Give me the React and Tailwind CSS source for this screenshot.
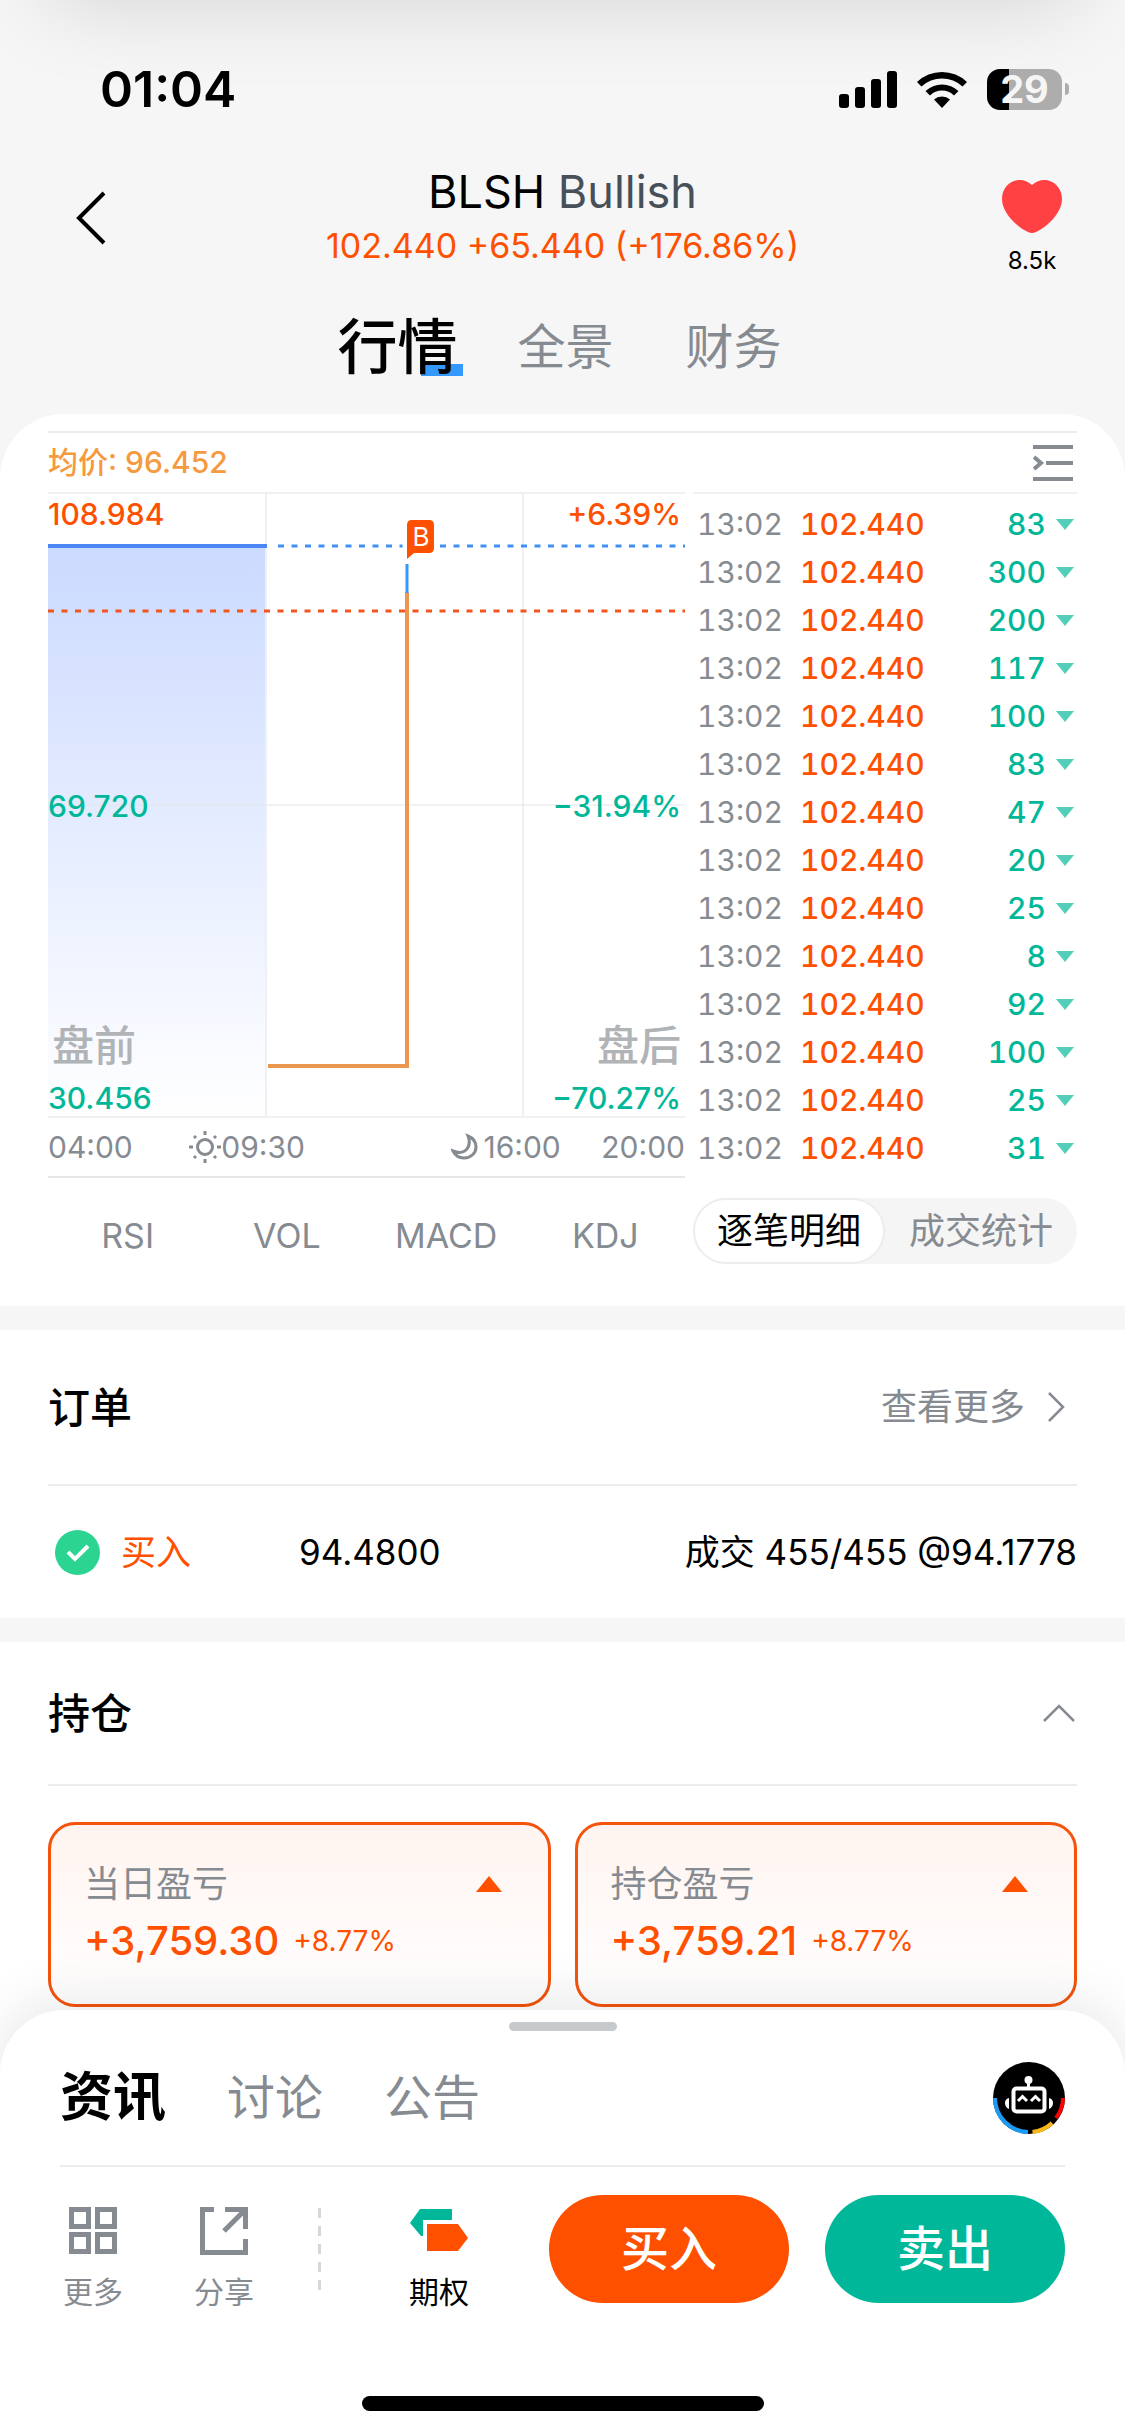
import React, { useState } from 'react';

const ORDER_FLOW = [83, 300, 200, 117, 100, 83, 47, 20, 25, 8, 92, 100, 25, 31];

const TABS = ['行情', '全景', '财务'];
const INDICATORS = ['RSI', 'VOL', 'MACD', 'KDJ'];
const FEEDS = ['资讯', '讨论', '公告'];

const PNL = [
  { label: '当日盈亏', value: '+3,759.30', pct: '+8.77%' },
  { label: '持仓盈亏', value: '+3,759.21', pct: '+8.77%' },
];

const StatusBar = () => (
  <div className="flex h-[132px] items-center justify-between pt-[46px] pl-[100px] pr-14">
    <span className="text-[50px] leading-[50px] font-semibold">01:04</span>
    <div className="flex items-center gap-5">
      <svg width="58" height="38" viewBox="0 0 58 38">
        <rect x="0" y="24" width="10" height="14" rx="3" />
        <rect x="16" y="17" width="10" height="21" rx="3" />
        <rect x="32" y="9" width="10" height="29" rx="3" />
        <rect x="48" y="1" width="10" height="37" rx="3" />
      </svg>
      <svg width="50" height="38" viewBox="0 0 50 38">
        <path d="M0 12 A36 36 0 0 1 50 12 L45.500 16.500 A30 30 0 0 0 4.500 16.500 Z" />
        <path d="M8.500 21 A24 24 0 0 1 41.500 21 L37 25.500 A17 17 0 0 0 13 25.500 Z" />
        <path d="M17 29.500 A12 12 0 0 1 33 29.500 L25 38 Z" />
      </svg>
      <div className="flex items-center gap-[3px]">
        <div className="flex h-[41px] w-[75px] items-center justify-center rounded-[13px] bg-[linear-gradient(90deg,#000_22px,#adadad_22px)] text-[38px] leading-none font-bold text-[#f6f6f6]">
          29
        </div>
        <div className="h-3 w-1 rounded-r-full bg-[#adadad]" />
      </div>
    </div>
  </div>
);

const Header = () => (
  <header className="flex items-center justify-between px-12 pt-[30px]">
    <button aria-label="返回" className="flex w-[120px] pl-7">
      <svg width="30" height="54" viewBox="0 0 30 54" fill="none" stroke="#000" strokeWidth="4">
        <path d="M28 2 L3 27 L28 52" />
      </svg>
    </button>
    <div className="text-center">
      <h1 className="text-[45px] leading-[56px]">
        BLSH <span className="text-[#474f59]">Bullish</span>
      </h1>
      <p className="text-[34px] leading-[52px] text-[#ff5000]">102.440 +65.440 (+176.86%)</p>
    </div>
    <button className="flex w-[120px] flex-col items-end pt-[18px]">
      <span className="flex flex-col items-center gap-4 pr-[15px]">
        <svg width="60" height="53" viewBox="0 0 60 53" fill="#ff4143">
          <path d="M30 5 C34 1.500 38 0 42 0 C52 0 60 8 60 19 C60 33 45 47 34 52 Q30 54 26 52 C15 47 0 33 0 19 C0 8 8 0 18 0 C22 0 26 1.500 30 5 Z" />
        </svg>
        <span className="text-[24px] leading-[24px]">8.5k</span>
      </span>
    </button>
  </header>
);

const PriceChart = () => (
  <div className="relative h-[626px] text-[30px] leading-[32px]">
    <svg className="absolute inset-0 h-full w-full" viewBox="0 0 637 626" preserveAspectRatio="none" fill="none">
      <defs>
        <linearGradient id="premarket" x1="0" y1="0" x2="0" y2="1">
          <stop offset="0" stopColor="#cbdaff" />
          <stop offset="1" stopColor="#ffffff" />
        </linearGradient>
      </defs>
      <rect x="0" y="54" width="218" height="571" fill="url(#premarket)" />
      <g stroke="#f0f0f2" strokeWidth="2">
        <path d="M0 1 H637 M0 625 H637 M218 0 V626 M475 0 V626" />
        <path d="M0 313 H637" strokeWidth="1" stroke="#e2e4e8" />
      </g>
      <path d="M0 54 H219" stroke="#4b86f5" strokeWidth="4" />
      <path d="M230 54 H637" stroke="#3f8ff5" strokeWidth="3" strokeDasharray="6 7.500" />
      <path d="M0 119 H637" stroke="#f0561d" strokeWidth="3" strokeDasharray="6 7.500" />
      <path d="M220 574 H359 V100" stroke="#ec9750" strokeWidth="4" />
      <path d="M359 101 V72" stroke="#3399ff" strokeWidth="3" />
      <path d="M352 24 H392 V64 H366 L356 71 Z" fill="#fff" />
      <path d="M364 28 H381 Q386 28 386 33 V56 Q386 61 381 61 H366 L359 67 V33 Q359 28 364 28 Z" fill="#ff5000" />
      <text x="373" y="54" fill="#fff" fontSize="26" textAnchor="middle" fontFamily="Inter">B</text>
    </svg>
    <div className="absolute inset-0 flex flex-col justify-between pt-[6px] pr-1 text-[#00b899]">
      <div className="flex justify-between font-medium text-[#ff5000]">
        <span>108.984</span>
        <span>+6.39%</span>
      </div>
      <div className="flex justify-between pt-[60px] font-medium">
        <span>69.720</span>
        <span>−31.94%</span>
      </div>
      <div className="font-medium">
        <div className="flex justify-between pb-[11px] pl-1 text-[42px] leading-[50px] text-[#b1b4b7]">
          <span>盘前</span>
          <span>盘后</span>
        </div>
        <div className="flex justify-between pb-1">
          <span>30.456</span>
          <span>−70.27%</span>
        </div>
      </div>
    </div>
  </div>
);

const SunIcon = () => (
  <svg width="32" height="32" viewBox="0 0 32 32" fill="none" stroke="#868b91" strokeWidth="3">
    <circle cx="16" cy="16" r="7.500" />
    <path d="M16 0 V4 M16 28 V32 M0 16 H4 M28 16 H32 M5 5 L7 7 M25 25 L27 27 M5 27 L7 25 M25 7 L27 5" />
  </svg>
);

const MoonIcon = () => (
  <svg width="28" height="28" viewBox="0 0 28 28" fill="none" stroke="#868b91" strokeWidth="3">
    <path d="M17 3 C22 5 25 9 25 14 C25 20 20 25 13 25 C8 25 4 22 2 18 C7 20 12 20 15 17 C19 13 19 8 17 3 Z" />
  </svg>
);

const TimeAxis = () => (
  <div className="flex h-[60px] items-center justify-between border-b-2 border-[#e6e7e8] text-[30px] text-[#868b91]">
    <span>04:00</span>
    <span className="flex items-center pl-4">
      <SunIcon />
      09:30
    </span>
    <span className="flex items-center gap-1 pl-[106px]">
      <MoonIcon />
      16:00
    </span>
    <span>20:00</span>
  </div>
);

const TradeTable = () => (
  <table className="mt-[6px] w-full text-[30px] tabular-nums">
    <tbody>
      {ORDER_FLOW.map((volume, i) => (
        <tr key={i} className="h-12">
          <td className="w-[107px] p-0 pl-1 text-[#868b91]">13:02</td>
          <td className="p-0 font-medium text-[#ff5000]">102.440</td>
          <td className="p-0 pr-[3px] font-medium text-[#00b899]">
            <span className="flex items-center justify-end gap-[10px]">
              {volume}
              <svg width="18" height="11" viewBox="0 0 18 11" fill="#53ceb8">
                <path d="M0 0 H18 L9 11 Z" />
              </svg>
            </span>
          </td>
        </tr>
      ))}
    </tbody>
  </table>
);

const QuotePanel = () => {
  const [mode, setMode] = useState('逐笔明细');

  return (
    <section className="rounded-t-[64px] bg-white px-12 pt-[17px] pb-[42px]">
      <div className="flex h-[61px] items-center justify-between border-t-2 border-[#ececee] text-[30px] text-[#f59a3e]">
        <span className="font-medium">均价: 96.452</span>
        <button aria-label="收起明细" className="pr-1">
          <svg width="40" height="36" viewBox="0 0 40 36" fill="none" stroke="#868b91" strokeWidth="4">
            <path d="M0 2 H40 M13 18 H40 M0 34 H40" />
            <path d="M1 12 L8 18 L1 24" />
          </svg>
        </button>
      </div>
      <div className="flex gap-2">
        <div className="min-w-0 flex-1">
          <PriceChart />
          <TimeAxis />
          <div className="grid grid-cols-4 pt-[34px] text-[34px] leading-[48px] text-[#868b91]">
            {INDICATORS.map((name) => (
              <button key={name}>{name}</button>
            ))}
          </div>
        </div>
        <div className="w-[384px] border-t-2 border-[#f0f0f2]">
          <TradeTable />
          <div className="mt-[26px] grid h-[66px] grid-cols-2 rounded-full bg-[#f5f5f5] text-[36px]">
            {['逐笔明细', '成交统计'].map((item) => (
              <button
                key={item}
                onClick={() => setMode(item)}
                className={`rounded-full leading-[60px] ${
                  mode === item ? 'border-2 border-[#ededed] bg-white text-black' : 'text-[#868b91]'
                }`}
              >
                {item}
              </button>
            ))}
          </div>
        </div>
      </div>
    </section>
  );
};

const Orders = () => (
  <section className="bg-white px-12">
    <div className="flex h-[156px] items-center justify-between border-b-2 border-[#ececee]">
      <h2 className="text-[42px] font-medium">订单</h2>
      <a href="#orders" className="flex items-center gap-[22px] pr-3 text-[36px] text-[#868b91]">
        查看更多
        <svg width="18" height="30" viewBox="0 0 18 30" fill="none" stroke="#868b91" strokeWidth="2.500">
          <path d="M2 1 L16 15 L2 29" />
        </svg>
      </a>
    </div>
    <div className="flex h-[132px] items-center text-[35px]">
      <svg className="ml-[6px]" width="47" height="47" viewBox="0 0 47 47" fill="none">
        <circle cx="23.500" cy="23.500" r="22.500" fill="#2bd490" />
        <path d="M14 23 L21 30 L34 17" stroke="#fff" strokeWidth="4" />
      </svg>
      <span className="w-[198px] pl-5 text-[#ff5000]">买入</span>
      <span>94.4800</span>
      <span className="ml-auto">成交 455/455 @94.1778</span>
    </div>
  </section>
);

const Positions = () => (
  <section className="bg-white px-12 pb-[3px]">
    <div className="flex h-[144px] items-center justify-between border-b-2 border-[#ececee]">
      <h2 className="text-[42px] font-medium">持仓</h2>
      <button aria-label="收起">
        <svg width="34" height="18" viewBox="0 0 34 18" fill="none" stroke="#868b91" strokeWidth="2.500">
          <path d="M1 17 L16 2 L31 17" />
        </svg>
      </button>
    </div>
    <div className="grid grid-cols-2 gap-6 pt-9">
      {PNL.map((item) => (
        <div
          key={item.label}
          className="h-[185px] rounded-[27px] border-[3px] border-[#f4530c] bg-linear-to-b from-[#fff4f0] to-white pt-8 pr-[46px] pl-[33px]"
        >
          <div className="flex items-center justify-between text-[36px] leading-[54px] text-[#868b91]">
            {item.label}
            <svg width="26" height="16" viewBox="0 0 26 16" fill="#ff5000">
              <path d="M13 0 L26 16 H0 Z" />
            </svg>
          </div>
          <div className="flex items-center gap-[14px] leading-[60px] text-[#ff5000]">
            <span className="text-[40px] font-medium">{item.value}</span>
            <span className="text-[28px]">{item.pct}</span>
          </div>
        </div>
      ))}
    </div>
  </section>
);

const RobotIcon = () => (
  <svg width="72" height="72" viewBox="0 0 72 72" fill="none">
    <circle cx="36" cy="36" r="36" fill="#000" />
    <path d="M2 36 A34 34 0 0 0 35 70" stroke="#1a9bf5" strokeWidth="4" />
    <path d="M39.500 70 A34 34 0 0 0 59 61" stroke="#fbb617" strokeWidth="4" />
    <path d="M63 56 A34 34 0 0 0 70 36" stroke="#f00" strokeWidth="4" />
    <circle cx="35.500" cy="18" r="4" fill="#fff" />
    <path d="M35.500 20 V26" stroke="#fff" strokeWidth="3" />
    <rect x="20.500" y="26.500" width="31" height="23" rx="3" stroke="#fff" strokeWidth="4" />
    <path d="M25 39 L29.500 34.500 L34 39 M38 39 L42.500 34.500 L47 39" stroke="#fff" strokeWidth="3" />
    <path d="M16 36 Q12 37 12 41 Q12 45 16 47 Z M56 36 Q60 37 60 41 Q60 45 56 47 Z" fill="#fff" />
  </svg>
);

const BottomSheet = () => {
  const [feed, setFeed] = useState('资讯');

  return (
    <footer className="relative rounded-t-[64px] bg-white px-[60px] pt-3 pb-6 shadow-[0_-6px_60px_rgba(0,0,0,0.1)]">
      <div className="mx-auto h-[9px] w-[108px] rounded-full bg-[#c6cacd]" />
      <div className="flex h-[136px] items-center justify-between border-b-2 border-[#ececee]">
        <nav className="flex items-center gap-[61px]">
          {FEEDS.map((name) => (
            <button
              key={name}
              onClick={() => setFeed(name)}
              className={name === feed ? 'text-[53px] font-bold text-black' : 'text-[48px] text-[#868b91]'}
            >
              {name}
            </button>
          ))}
        </nav>
        <button aria-label="AI 助手">
          <RobotIcon />
        </button>
      </div>
      <div className="flex items-start justify-between pt-7 text-[30px] leading-[40px] text-[#868b91]">
        <button className="flex flex-col items-center gap-4 pt-[11px] pr-[7px] pl-[3px]">
          <svg width="50" height="50" viewBox="0 0 50 50" fill="none" stroke="#868b91" strokeWidth="5">
            <path d="M3.500 3.500 H20.500 V20.500 H3.500 Z M29.500 3.500 H46.500 V20.500 H29.500 Z M3.500 28.500 H20.500 V45.500 H3.500 Z M29.500 28.500 H46.500 V45.500 H29.500 Z" />
          </svg>
          更多
        </button>
        <button className="flex flex-col items-center gap-4 pt-[11px]">
          <svg width="50" height="50" viewBox="0 0 50 50" fill="none" stroke="#868b91" strokeWidth="5">
            <path d="M15 3.500 H3.500 V46.500 H46.500 V33" />
            <path d="M26 3.500 H46.500 V23 M46 4 L25 25" />
          </svg>
          分享
        </button>
        <div className="mt-[13px] h-[82px] w-[3px] bg-[repeating-linear-gradient(#d6d7d9_0_10px,transparent_10px_18px)]" />
        <button className="flex flex-col items-center gap-4 pt-[11px] pr-4 pl-6 text-black">
          <svg width="58" height="50" viewBox="0 0 58 50">
            <path d="M10 3 H42 V14 H13 V30 H11 L0 17 Z" fill="#00b899" />
            <path d="M17 18 H48 L58 32 L48 45 H17 Z" fill="#ff5000" />
          </svg>
          期权
        </button>
        <div className="flex gap-9 text-[48px] font-medium text-white">
          <button className="h-[108px] w-[240px] rounded-full bg-[#ff5000]">买入</button>
          <button className="h-[108px] w-[240px] rounded-full bg-[#00b899]">卖出</button>
        </div>
      </div>
      <div className="mx-auto mt-[84px] h-[15px] w-[402px] rounded-full bg-black" />
    </footer>
  );
};

const App = () => {
  const [tab, setTab] = useState('行情');

  return (
    <div className="relative overflow-hidden bg-[#f6f6f6] font-['Inter','Noto_Sans_CJK_SC',sans-serif] text-black">
      <div className="absolute inset-x-12 -top-60 h-60 shadow-[0_0_90px_rgba(0,0,0,0.15)]" />
      <StatusBar />
      <Header />
      <nav className="flex h-[141px] items-center justify-center gap-[72px] pt-[6px] pr-[6px]">
        {TABS.map((name) => (
          <button
            key={name}
            onClick={() => setTab(name)}
            className={`relative ${name === tab ? '-mr-3 text-[60px] font-medium text-black' : 'text-[48px] text-[#868b91]'}`}
          >
            {name === tab && <span className="absolute -right-[6px] bottom-4 h-3 w-[42px] bg-[#3399ff]" />}
            <span className="relative">{name}</span>
          </button>
        ))}
      </nav>
      <main className="flex flex-col gap-6">
        <QuotePanel />
        <Orders />
        <Positions />
      </main>
      <div className="bg-white">
        <BottomSheet />
      </div>
    </div>
  );
};

export default App;
